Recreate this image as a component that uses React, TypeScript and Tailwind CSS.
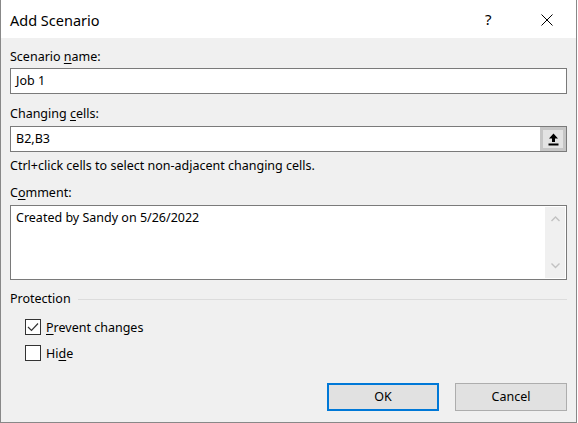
import React from "react";

const font = { fontFamily: '"Segoe UI", "Noto Sans", "Open Sans", sans-serif' };

function UpArrowIcon() {
  return (
    <svg width="11" height="13" viewBox="0 0 11 13">
      <path d="M5.5 0.5 L10 5.5 L7 5.5 L7 9 L4 9 L4 5.5 L1 5.5 Z" fill="#000" />
      <rect x="0.5" y="10.5" width="10" height="2" fill="#000" />
    </svg>
  );
}

function Chevron({ down }: { down?: boolean }) {
  return (
    <svg width="9" height="6" viewBox="0 0 9 6">
      <path
        d={down ? "M0.5 0.5 L4.5 4.5 L8.5 0.5" : "M0.5 5 L4.5 1 L8.5 5"}
        fill="none"
        stroke="#c2c2c2"
        strokeWidth="1.4"
      />
    </svg>
  );
}

function CheckBox({ checked }: { checked?: boolean }) {
  return (
    <div className="w-[16px] h-[16px] border border-[#333333] bg-white flex items-center justify-center">
      {checked && (
        <svg width="12" height="10" viewBox="0 0 12 10">
          <path d="M1 5 L4.5 8.5 L11 1.5" fill="none" stroke="#333333" strokeWidth="1.2" />
        </svg>
      )}
    </div>
  );
}

export default function App() {
  return (
    <div className="w-[578px] h-[423px] bg-white" style={font}>
      <div className="w-[577px] h-[423px] flex flex-col bg-[#f0f0f0] border-l border-r border-b border-[#888888] text-[12.5px] text-black">
        {/* title bar */}
        <div className="h-[38px] bg-white flex items-center shrink-0">
          <div className="pl-[9px] text-[14.5px] leading-[20px] mt-[1px]">Add Scenario</div>
          <div className="ml-auto text-[15px] leading-[20px] w-[12px] mr-[44px]">?</div>
          <div className="mr-[23px] mt-[2px]">
            <svg width="12" height="12" viewBox="0 0 12 12">
              <path d="M0.5 0.5 L11.5 11.5 M11.5 0.5 L0.5 11.5" stroke="#000" strokeWidth="1" />
            </svg>
          </div>
        </div>

        <div className="px-[9px] flex flex-col">
          <div className="mt-[11px] h-[16px] leading-[16px]">
            Scenario <span className="underline underline-offset-2">n</span>ame:
          </div>
          <div className="mt-[3px] h-[26px] border border-[#7a7a7a] bg-white flex items-center px-[5px]">
            Job 1
          </div>

          <div className="mt-[12px] h-[16px] leading-[16px]">
            Changing <span className="underline underline-offset-2">c</span>ells:
          </div>
          <div className="mt-[4px] h-[26px] border border-[#7a7a7a] bg-white flex items-center pl-[5px]">
            <span>B2,B3</span>
            <div className="ml-auto h-[24px] w-[26px] border-[3px] border-[#c6c6c6] bg-[#e3e3e3] flex items-center justify-center">
              <UpArrowIcon />
            </div>
          </div>

          <div className="mt-[6px] h-[16px] leading-[16px]">
            Ctrl+click cells to select non-adjacent changing cells.
          </div>

          <div className="mt-[11px] h-[16px] leading-[16px]">
            C<span className="underline underline-offset-2">o</span>mment:
          </div>
          <div className="mt-[4px] h-[75px] border border-[#7a7a7a] bg-white flex pl-[5px] pt-[4px]">
            <span className="leading-[16px]">Created by Sandy on 5/26/2022</span>
            <div className="ml-auto mr-[1px] -mt-[3px] mb-[1px] w-[20px] bg-[#f0f0f0] flex flex-col items-center justify-between py-[9px]">
              <Chevron />
              <Chevron down />
            </div>
          </div>

          <div className="mt-[11px] h-[16px] leading-[16px] flex items-center">
            <span>Protection</span>
            <div className="flex-1 ml-[7px] h-px bg-[#dcdcdc] mt-[1px]" />
          </div>

          <div className="mt-[11px] h-[18px] flex items-center pl-[15px]">
            <CheckBox checked />
            <span className="ml-[5px] leading-[16px] mt-[1px]">
              <span className="underline underline-offset-2">P</span>revent changes
            </span>
          </div>
          <div className="mt-[8px] h-[18px] flex items-center pl-[15px]">
            <CheckBox />
            <span className="ml-[5px] leading-[16px] mt-[1px]">
              Hi<span className="underline underline-offset-2">d</span>e
            </span>
          </div>

          <div className="mt-[21px] flex justify-end gap-[16px]">
            <div className="w-[112px] h-[28px] border-2 border-[#0078d7] bg-[#e1e1e1] flex items-center justify-center">
              OK
            </div>
            <div className="w-[112px] h-[28px] border border-[#adadad] bg-[#e1e1e1] flex items-center justify-center">
              Cancel
            </div>
          </div>
        </div>
      </div>
    </div>
  );
}
